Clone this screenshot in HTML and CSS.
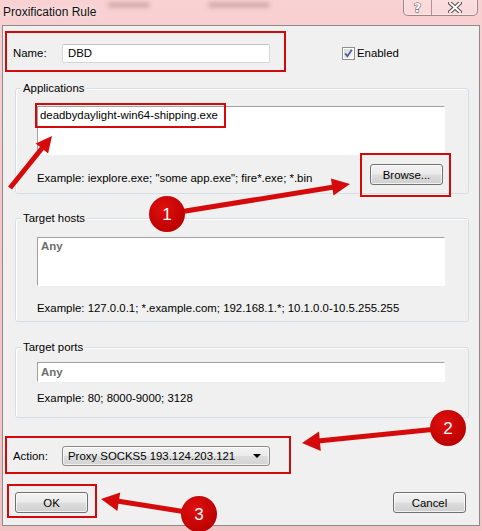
FILE: index.html
```html
<!DOCTYPE html>
<html lang="en">

<head>
    <meta charset="UTF-8">
    <title>Proxification Rule</title>
    <link rel="stylesheet" href="styles.css">
</head>

<body>
    <div class="window">
        <div class="titlebar">
            <span class="title">Proxification Rule</span>
            <span class="ghost ghost-a"></span>
            <span class="ghost ghost-b"></span>
            <div class="caption-buttons">
                <span class="cap cap-help">?</span>
                <span class="cap cap-close">
                    <svg width="14" height="11" viewBox="0 0 14 11">
                        <path d="M2 1 L12 10 M12 1 L2 10" stroke="#5a4a4c" stroke-width="4" stroke-linecap="square" />
                        <path d="M2 1 L12 10 M12 1 L2 10" stroke="#fff" stroke-width="2" stroke-linecap="square" />
                    </svg>
                </span>
            </div>
        </div>

        <div class="client">
            <div class="name-row">
                <span class="label">Name:</span>
                <div class="textbox name-box">DBD</div>
                <span class="check">
                    <svg width="13" height="13" viewBox="0 0 13 13">
                        <defs>
                            <linearGradient id="cbg" x1="0" y1="0" x2="1" y2="1">
                                <stop offset="0" stop-color="#d6d6d6" />
                                <stop offset="1" stop-color="#fbfbfb" />
                            </linearGradient>
                        </defs>
                        <rect x="0.5" y="0.5" width="12" height="12" fill="#fff" stroke="#8e8f8f" />
                        <rect x="2" y="2" width="9" height="9" fill="url(#cbg)" />
                        <path d="M3.2 6.4 L5.4 9.2 L9.8 2.8" fill="none" stroke="#4b5f9a" stroke-width="1.8" />
                    </svg>
                    Enabled
                </span>
            </div>

            <div class="group apps">
                <div class="group-title">Applications</div>
                <div class="group-body">
                    <div class="listbox">deadbydaylight-win64-shipping.exe</div>
                    <div class="hint-row">
                        <span class="hint">Example: iexplore.exe; "some app.exe"; fire*.exe; *.bin</span>
                        <button class="btn browse">Browse...</button>
                    </div>
                </div>
            </div>

            <div class="group hosts">
                <div class="group-title">Target hosts</div>
                <div class="group-body">
                    <div class="listbox"><span class="any">Any</span></div>
                    <div class="hint">Example: 127.0.0.1; *.example.com; 192.168.1.*; 10.1.0.0-10.5.255.255</div>
                </div>
            </div>

            <div class="group ports">
                <div class="group-title">Target ports</div>
                <div class="group-body">
                    <div class="listbox single"><span class="any">Any</span></div>
                    <div class="hint">Example: 80; 8000-9000; 3128</div>
                </div>
            </div>

            <div class="action-row">
                <span class="label">Action:</span>
                <div class="combo">
                    <span>Proxy SOCKS5 193.124.203.121</span>
                    <span class="combo-arrow"></span>
                </div>
            </div>

            <div class="button-row">
                <button class="btn">OK</button>
                <button class="btn">Cancel</button>
            </div>
        </div>

        <!-- red callouts drawn on top of the dialog -->
        <svg class="marks" width="482" height="531" viewBox="0 0 482 531">
            <defs>
                <radialGradient id="dot" cx="0.4" cy="0.35" r="0.7">
                    <stop offset="0" stop-color="#e0100e" />
                    <stop offset="1" stop-color="#b80000" />
                </radialGradient>
            </defs>
            <g fill="none" stroke="#d30a0a" stroke-width="2">
                <rect x="6" y="32" width="279" height="39" />
                <rect x="36" y="104" width="189" height="23" />
                <rect x="361" y="154" width="89" height="42" />
                <rect x="6" y="437" width="284" height="36" />
                <rect x="8" y="485" width="88" height="32" />
            </g>
            <g stroke="#d50b0b" stroke-width="5">
                <line x1="10" y1="188" x2="43" y2="147" />
                <line x1="167" y1="214" x2="334" y2="187" />
                <line x1="447" y1="428" x2="318" y2="441" />
                <line x1="199" y1="514" x2="117" y2="501" />
            </g>
            <g fill="#d50b0b">
                <polygon points="52,136 48.1,153.4 35.7,143.4" />
                <polygon points="350,184 333.5,195.5 330.9,178.5" />
                <polygon points="302,443 320.8,451 319,431.5" />
                <polygon points="101,499 117.4,511 120.2,492.4" />
            </g>
            <g fill="url(#dot)">
                <circle cx="167" cy="214" r="18" />
                <circle cx="448" cy="428" r="18" />
                <circle cx="199" cy="514" r="18" />
            </g>
            <g class="mark-num" fill="#fff" text-anchor="middle">
                <text x="167" y="220">1</text>
                <text x="448" y="434">2</text>
                <text x="199" y="520">3</text>
            </g>
        </svg>
    </div>
</body>

</html>
```

FILE: styles.css
```css
* {
    margin: 0;
    padding: 0;
    box-sizing: border-box;
}

body {
    font-family: 'Liberation Sans', Arial, sans-serif;
    font-size: 11.4px;
    line-height: 13px;
    color: #000;
    background-color: #f5c8cb;
}

.window {
    position: relative;
    width: 482px;
    height: 531px;
    overflow: hidden;
    background: linear-gradient(180deg, #f8d1d3 0%, #f5c7ca 40%, #f3c2c5 100%);
}

/* caption strip; smudges stand for what shows through the glass */
.titlebar {
    height: 25px;
    display: flex;
    align-items: flex-start;
}

.title {
    padding: 5px 0 0 3px;
    font-size: 12px;
    line-height: 14px;
    color: #111;
    text-shadow: 0 0 6px rgba(255, 255, 255, 0.9);
}

.ghost {
    height: 6px;
    margin-top: 2px;
    border-radius: 3px;
    background-color: rgba(90, 50, 52, 0.22);
    filter: blur(2px);
}

.ghost-a {
    width: 42px;
    margin-left: 12px;
}

.ghost-b {
    width: 62px;
    margin-left: 58px;
}

.caption-buttons {
    margin-left: auto;
    margin-right: 4px;
    margin-top: -1px;
    height: 17px;
    display: flex;
    border: 1px solid rgba(90, 60, 62, 0.55);
    border-top: none;
    border-radius: 0 0 5px 5px;
    background: linear-gradient(180deg, rgba(255, 255, 255, 0.25), rgba(255, 235, 236, 0.35));
    box-shadow: inset 0 0 0 1px rgba(255, 255, 255, 0.35);
}

.cap {
    display: flex;
    align-items: center;
    justify-content: center;
}

.cap-help {
    width: 28px;
    border-right: 1px solid rgba(90, 60, 62, 0.45);
    font-family: 'DejaVu Sans', sans-serif;
    font-weight: bold;
    font-size: 13px;
    color: #fff;
    -webkit-text-stroke: 1px #5a4a4c;
    paint-order: stroke fill;
}

.cap-close {
    width: 45px;
}

/* dialog body */
.client {
    margin: 0 2px;
    height: 501px;
    border: 1px solid #8c8c8c;
    background-color: #f0f0f0;
    padding: 18px 0 0 10px;
}

.name-row,
.action-row {
    display: flex;
    align-items: center;
}

.label {
    width: 49px;
}

.textbox {
    height: 19px;
    padding: 0 5px;
    display: flex;
    align-items: center;
    background: #fff;
    border: 1px solid #d6d6d6;
    border-top-color: #c4c4c4;
    border-radius: 2px;
}

.name-box {
    width: 208px;
}

.check {
    margin-left: 72px;
    display: flex;
    align-items: center;
    gap: 2px;
}

.group {
    width: 454px;
    margin-left: 2px;
    border: 1px solid #d5dfe5;
    border-radius: 3px;
    box-shadow: inset 1px 1px 0 #fff;
}

.group-title {
    width: max-content;
    margin: -7px 0 0 5px;
    padding: 0 2px;
    background-color: #f0f0f0;
}

.group-body {
    padding-left: 21px;
}

.apps {
    margin-top: 25px;
}

.apps .group-body {
    padding-top: 11px;
    padding-bottom: 8px;
}

.hosts {
    margin-top: 24px;
}

.hosts .group-body {
    padding-top: 12px;
    padding-bottom: 6px;
}

.ports {
    margin-top: 25px;
}

.ports .group-body {
    padding-top: 8px;
    padding-bottom: 12px;
}

.listbox {
    width: 408px;
    height: 49px;
    padding: 2px 2px;
    background-color: #fff;
    border: 1px solid;
    border-color: #a0a0a0 #fff #fff #a0a0a0;
}

.listbox.single {
    height: 20px;
    padding-top: 3px;
}

.any {
    padding-left: 1px;
    font-weight: bold;
    color: #6d6d6d;
}

.hint-row {
    width: 408px;
    margin-top: 9px;
    display: flex;
    align-items: flex-end;
    justify-content: space-between;
}

.hosts .hint {
    margin-top: 16px;
}

.ports .hint {
    margin-top: 10px;
}

.btn {
    width: 73px;
    height: 21px;
    font-family: inherit;
    font-size: 11.4px;
    color: #000;
    border: 1px solid #707070;
    border-radius: 3px;
    background: linear-gradient(180deg, #f2f2f2 0%, #ebebeb 48%, #dddddd 52%, #cfcfcf 100%);
    box-shadow: inset 0 0 0 1px rgba(255, 255, 255, 0.7);
}

.browse {
    margin-right: 2px;
}

.action-row {
    margin-top: 28px;
}

.combo {
    width: 208px;
    height: 20px;
    padding: 0 8px 0 5px;
    display: flex;
    align-items: center;
    justify-content: space-between;
    border: 1px solid #8a8a8a;
    border-radius: 3px;
    background: linear-gradient(180deg, #f2f2f2 0%, #ebebeb 48%, #dddddd 52%, #d3d3d3 100%);
    box-shadow: inset 0 0 0 1px rgba(255, 255, 255, 0.7);
}

.combo-arrow {
    width: 0;
    height: 0;
    border-left: 4px solid transparent;
    border-right: 4px solid transparent;
    border-top: 4px solid #000;
}

.button-row {
    width: 453px;
    margin-top: 26px;
    padding-left: 2px;
    display: flex;
    justify-content: space-between;
}

.marks {
    position: absolute;
    top: 0;
    left: 0;
    pointer-events: none;
}

.mark-num {
    font-family: 'Liberation Sans', Arial, sans-serif;
    font-size: 17px;
}
```
